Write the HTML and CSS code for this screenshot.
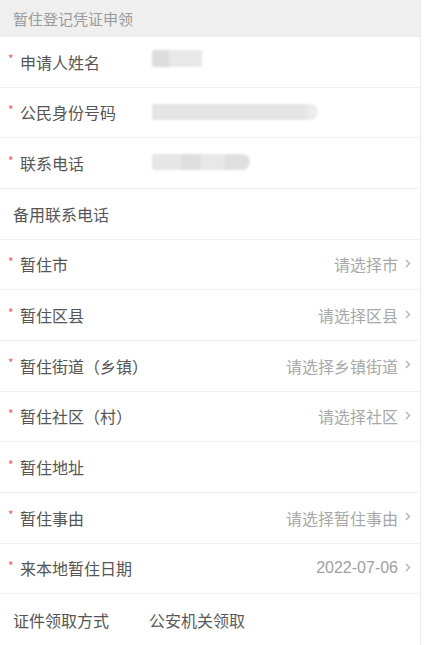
FILE: index.html
```html
<!DOCTYPE html>
<html lang="zh-CN">
<head>
<meta charset="utf-8">
<title>暂住登记凭证申领</title>
<link rel="stylesheet" href="styles.css">
</head>
<body>
<div class="page">
  <div class="header">暂住登记凭证申领</div>

  <div class="row"><span class="req">*</span><span class="label">申请人姓名</span><div class="mask mask-name"></div></div>
  <div class="row"><span class="req">*</span><span class="label">公民身份号码</span><div class="mask mask-id"></div></div>
  <div class="row"><span class="req">*</span><span class="label">联系电话</span><div class="mask mask-phone"></div></div>
  <div class="row"><span class="req empty"></span><span class="label">备用联系电话</span></div>
  <div class="row"><span class="req">*</span><span class="label">暂住市</span><span class="value">请选择市</span><svg class="chev" width="6" height="9" viewBox="0 0 6 9"><path d="M1 1l3.5 3.5L1 8" fill="none" stroke="#b3b3b3" stroke-width="1.4"/></svg></div>
  <div class="row"><span class="req">*</span><span class="label">暂住区县</span><span class="value">请选择区县</span><svg class="chev" width="6" height="9" viewBox="0 0 6 9"><path d="M1 1l3.5 3.5L1 8" fill="none" stroke="#b3b3b3" stroke-width="1.4"/></svg></div>
  <div class="row"><span class="req">*</span><span class="label">暂住街道（乡镇）</span><span class="value">请选择乡镇街道</span><svg class="chev" width="6" height="9" viewBox="0 0 6 9"><path d="M1 1l3.5 3.5L1 8" fill="none" stroke="#b3b3b3" stroke-width="1.4"/></svg></div>
  <div class="row"><span class="req">*</span><span class="label">暂住社区（村）</span><span class="value">请选择社区</span><svg class="chev" width="6" height="9" viewBox="0 0 6 9"><path d="M1 1l3.5 3.5L1 8" fill="none" stroke="#b3b3b3" stroke-width="1.4"/></svg></div>
  <div class="row"><span class="req">*</span><span class="label">暂住地址</span></div>
  <div class="row"><span class="req">*</span><span class="label">暂住事由</span><span class="value">请选择暂住事由</span><svg class="chev" width="6" height="9" viewBox="0 0 6 9"><path d="M1 1l3.5 3.5L1 8" fill="none" stroke="#b3b3b3" stroke-width="1.4"/></svg></div>
  <div class="row"><span class="req">*</span><span class="label">来本地暂住日期</span><span class="value date">2022-07-06</span><svg class="chev" width="6" height="9" viewBox="0 0 6 9"><path d="M1 1l3.5 3.5L1 8" fill="none" stroke="#b3b3b3" stroke-width="1.4"/></svg></div>
  <div class="row last"><span class="req empty"></span><span class="label fixed">证件领取方式</span><span class="plain">公安机关领取</span></div>
</div>
</body>
</html>
```

FILE: styles.css
```css
* { box-sizing: border-box; }
html, body { margin: 0; padding: 0; background: #fff; }
body {
  font-family: "Noto Sans CJK SC", "Noto Sans", sans-serif;
  width: 426px;
  height: 645px;
  overflow: hidden;
}
.page {
  width: 421px;
  height: 645px;
  border-right: 1px solid #ededed;
  display: grid;
  grid-template-rows: 37px repeat(12, 1fr);
}
.header {
  background: #efefef;
  color: #9a9a9a;
  font-size: 15px;
  padding-left: 13px;
  display: flex;
  align-items: center;
}
.row {
  display: flex;
  align-items: center;
  border-bottom: 1px solid #f1f1f1;
  padding-left: 8px;
  padding-right: 9px;
  color: #555;
  font-size: 16px;
}
.row.last { border-bottom: none; }
.req {
  width: 12px;
  color: #e06060;
  font-size: 12px;
  margin-top: -6px;
  flex: none;
}
.req.empty { width: 5px; }
.label { flex: none; width: 132px; white-space: nowrap; }
.label.fixed { width: 136px; }
.value {
  margin-left: auto;
  color: #a8a8a8;
}
.value.date { font-family: "Liberation Sans", Arial, sans-serif; color: #a0a0a0; }
.chev {
  flex: none;
  margin-left: 7px;
  margin-top: -2px;
}
.plain { color: #5a5a5a; }
.mask {
  height: 17px;
  border-radius: 2px;
  filter: blur(1.2px);
}
.mask-name {
  width: 50px;
  background: linear-gradient(90deg, #dcdcdc 0 35%, #e8e8e8 35% 100%);
  margin-top: -6px;
}
.mask-id {
  width: 166px;
  height: 16px;
  background: linear-gradient(90deg, #e4e4e4 0 90%, #f0f0f0 100%);
  border-radius: 2px 8px 8px 2px;
}
.mask-phone {
  width: 98px;
  height: 16px;
  background: linear-gradient(90deg, #e6e6e6 0 30%, #dedede 30% 50%, #e8e8e8 50% 75%, #e0e0e0 75% 100%);
  border-radius: 2px 8px 8px 2px;
  margin-top: -3px;
}
```
